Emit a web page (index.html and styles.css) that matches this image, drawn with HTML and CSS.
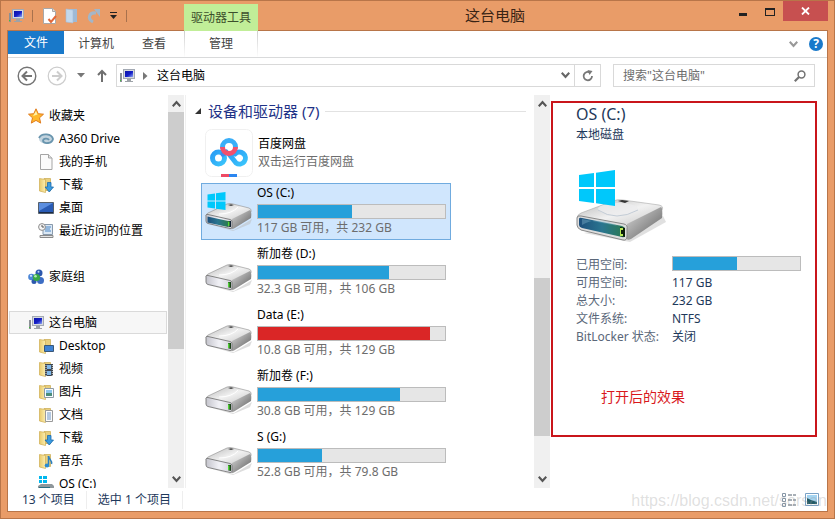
FILE: index.html
```
<!DOCTYPE html>
<html lang="zh-CN">
<head>
    <meta charset="UTF-8">
    <title>这台电脑</title>
    <link rel="stylesheet" href="styles.css">
</head>
<body>
<!-- 图标 -->
<svg class="sprite" width="0" height="0">
    <defs>
        <linearGradient id="gTop" x1="0" y1="0" x2="1" y2="1">
            <stop offset="0" stop-color="#b4b4b4"/><stop offset=".5" stop-color="#f1f1f1"/><stop offset="1" stop-color="#c4c4c4"/>
        </linearGradient>
        <linearGradient id="gSide" x1="0" y1="0" x2="1" y2="1">
            <stop offset="0" stop-color="#dcdcdc"/><stop offset=".6" stop-color="#8f8f8f"/><stop offset="1" stop-color="#5c5c5c"/>
        </linearGradient>
        <linearGradient id="gFront" x1="0" y1="0" x2="1" y2="0">
            <stop offset="0" stop-color="#c4c4cc"/><stop offset=".5" stop-color="#f1f1f6"/><stop offset="1" stop-color="#d0d0d8"/>
        </linearGradient>
        <linearGradient id="gSys" x1="0" y1="0" x2="1" y2="0">
            <stop offset="0" stop-color="#1d4f7c"/><stop offset=".5" stop-color="#2a7590"/><stop offset="1" stop-color="#2a7a50"/>
        </linearGradient>
        <linearGradient id="gFolder" x1="0" y1="0" x2="1" y2="0">
            <stop offset="0" stop-color="#e9c96a"/><stop offset="1" stop-color="#fbeeb0"/>
        </linearGradient>
        <linearGradient id="gScreen" x1="0" y1="0" x2="1" y2="1">
            <stop offset="0" stop-color="#0a12a8"/><stop offset=".55" stop-color="#1620c8"/><stop offset="1" stop-color="#8ea6f2"/>
        </linearGradient>
        <linearGradient id="gPan" x1="0" y1="0" x2="1" y2="1">
            <stop offset="0" stop-color="#2a9df5"/><stop offset="1" stop-color="#39c4fb"/>
        </linearGradient>
    </defs>
    <symbol id="pc" viewBox="0 0 16 16">
        <rect x="4.500" y="1.500" width="11" height="9" fill="#d6dae0" stroke="#a3a9b3"/>
        <rect x="6" y="3" width="8" height="6" fill="url(#gScreen)"/>
        <path d="M8 11h4v2h2v1H6v-1h2z" fill="#9da2a8"/>
        <path d="M1 5h2v9H1z" fill="#8b9096"/><path d="M1 12h1v1H1z" fill="#3fc03a"/>
    </symbol>
    <symbol id="folder" viewBox="0 0 16 16">
        <path d="M6 1.500h6.500v12H6z" fill="#e8cf7e" stroke="#c9a94e" stroke-width=".7"/>
        <path d="M1.500 1.500l6 1v13l-6-1.500z" fill="url(#gFolder)" stroke="#cfae52" stroke-width=".7"/>
    </symbol>
    <symbol id="download" viewBox="0 0 16 16">
        <use href="#folder"/>
        <path d="M9.500 5.500h3.500v4.500h2.500l-4.250 5-4.250-5h2.500z" fill="#3b9be0" stroke="#1c6bab" stroke-width=".8"/>
    </symbol>
    <symbol id="drive" viewBox="0 0 48 48">
        <path d="M4 37l25 6 18-11-2 5-17 7z" fill="#bbb" opacity=".5"/>
        <path d="M1 29Q1 27 3 26L22 17Q25 16 28 17L44 21Q47 22 46 25L27 34z" fill="url(#gTop)" stroke="#8d8d8d" stroke-width=".6"/>
        <path d="M27 32L45 23Q47 25 46 31L29 41.500Q27 42.500 26.500 41z" fill="url(#gSide)"/>
        <path d="M1 28.500Q1 27 3 27.500L25 32.500Q27 33 27 34.500V40Q27 42 25 41.500L3 36.500Q1 36 1 34z" fill="url(#gFront)" stroke="#777" stroke-width=".9"/>
        <path d="M14 27Q27 27 33 20" fill="none" stroke="#fff" stroke-width="1"/>
        <path d="M23 18l3-.8 3 .8-3 1z" fill="#444"/>
        <path d="M23 34h3v6l-3-.7z" fill="#1c401a"/><path d="M23 34.500h1.500v4.500H23z" fill="#52d636"/>
    </symbol>
    <symbol id="flag" viewBox="0 0 36 36">
        <path d="M0 5l15-2v14H0zM17 2.700L36 0v17H17zM0 19h15v14L0 31zM17 19h19v17l-19-2.700z" fill="#00c8fb"/>
    </symbol>
    <symbol id="chev" viewBox="0 0 9 7">
        <path d="M0 1.500L4.500 6.500 9 1.500 7.500 0 4.500 3.300 1.500 0z" fill="currentColor"/>
    </symbol>
</svg>

<div class="window">
    <div class="titlebar">
        <div class="quick">
            <svg class="ico" role="img"><use href="#pc"/></svg>
            <i class="bar"></i>
            <button aria-label="属性"><svg width="14" height="16" viewBox="0 0 14 16"><path d="M.5.5h9l3 3v12H.5z" fill="#fff" stroke="#a8a8a8"/><path d="M9.500.5v3h3" fill="#ddd" stroke="#a8a8a8"/><path d="M5.500 11l2.500 3 5-6" fill="none" stroke="#e2683a" stroke-width="2"/></svg></button>
            <button aria-label="新建文件夹"><svg width="14" height="16" viewBox="0 0 14 16"><path d="M5 1h7v13H5z" fill="#9fb9d4"/><path d="M1 1l7 1v13l-7-1z" fill="#c3d8ec" stroke="#a4bcd6" stroke-width=".6"/></svg></button>
            <button aria-label="撤消"><svg width="14" height="16" viewBox="0 0 14 16"><path d="M6 14C0 11 2 4 9 5" fill="none" stroke="#a3b6c8" stroke-width="3"/><path d="M7 1h6v8z" fill="#a3b6c8"/></svg></button>
            <button aria-label="自定义快速访问工具栏"><svg width="9" height="8" viewBox="0 0 9 8"><path d="M1 0h7v1H1zM1 3h7L4.500 7z" fill="#222"/></svg></button>
            <i class="bar"></i>
        </div>
        <div class="context-label">驱动器工具</div>
        <h1>这台电脑</h1>
        <div class="controls">
            <button aria-label="最小化"><svg width="10" height="12"><path d="M1 8h8v3H1z" fill="#222"/></svg></button>
            <button aria-label="最大化"><svg width="10" height="12"><path d="M0 3h10v8H0zM1 5v5h8V5z" fill="#222" fill-rule="evenodd"/></svg></button>
            <button class="close" aria-label="关闭"><svg width="9" height="8"><path d="M1 .5l7 7M8 .5l-7 7" stroke="#fff" stroke-width="1.800"/></svg></button>
        </div>
    </div>

    <div class="client">
        <div class="ribbon">
            <div class="tabs">
                <button class="file">文件</button>
                <button>计算机</button>
                <button>查看</button>
            </div>
            <button class="manage">管理</button>
            <div class="ribbon-right">
                <button aria-label="展开功能区"><svg class="grey" width="9" height="7"><use href="#chev"/></svg></button>
                <button class="help" aria-label="帮助">?</button>
            </div>
        </div>

        <div class="address-row">
            <div class="arrows">
                <button aria-label="后退"><svg width="20" height="20" viewBox="0 0 20 20" fill="none" stroke="#747474"><circle cx="10" cy="10" r="8.800" stroke-width="1.400"/><path d="M15 10H6M10 5.500L5.500 10l4.500 4.500" stroke-width="2"/></svg></button>
                <button aria-label="前进"><svg width="20" height="20" viewBox="0 0 20 20" fill="none" stroke="#cdcdcd"><circle cx="10" cy="10" r="8.800" stroke-width="1.200"/><path d="M5 10h9M10 5.500l4.500 4.500-4.500 4.500" stroke-width="2"/></svg></button>
                <button class="recent" aria-label="最近位置"><svg width="8" height="5"><path d="M0 0h8L4 4.500z" fill="#777"/></svg></button>
                <button aria-label="上移"><svg width="10" height="13" fill="none" stroke="#6f6f6f" stroke-width="2"><path d="M5 13V2M1 6l4-4 4 4"/></svg></button>
            </div>
            <div class="address">
                <svg class="ico"><use href="#pc"/></svg>
                <svg width="5" height="8"><path d="M0 0l4.500 4L0 8z" fill="#777"/></svg>
                <button class="crumb">这台电脑</button>
                <button class="drop" aria-label="以前的位置"><svg width="9" height="7"><use href="#chev"/></svg></button>
                <button class="refresh" aria-label="刷新"><svg width="12" height="12" viewBox="0 0 12 12"><path d="M8 2.500A4.200 4.200 0 1 0 10 6" fill="none" stroke="#777" stroke-width="1.800"/><path d="M5.500 0l5 1L7.500 5z" fill="#777"/></svg></button>
            </div>
            <div class="search">
                <input type="text" aria-label="搜索" placeholder='搜索"这台电脑"'>
                <svg width="12" height="12" viewBox="0 0 12 12" fill="none" stroke="#737373"><circle cx="7.500" cy="4.500" r="3.400" stroke-width="1.500"/><path d="M5 7L.8 11.200" stroke-width="2.200"/></svg>
            </div>
        </div>

        <div class="main">
            <nav class="nav">
                <div class="tree">
                    <div class="group">
                        <a href="#" class="root"><svg class="ico" viewBox="0 0 16 16"><path d="M8 .8l2.200 4.900 5.300.5-4 3.600 1.200 5.300L8 12.400l-4.700 2.700 1.200-5.300-4-3.600 5.300-.5z" fill="#ffb92c" stroke="#e07b1d"/><path d="M8 3l1.500 3.500L5 8z" fill="#fff3a8"/></svg>收藏夹</a>
                        <a href="#"><svg class="ico" viewBox="0 0 16 16" fill="none"><ellipse cx="8" cy="8" rx="7" ry="4.500" fill="#c2d3de"/><path d="M1 7C4 1 14 3 15 8c-1 5-9 5-10 2 0-3 5-3 6-1" stroke="#6995ae" stroke-width="1.800"/></svg>A360 Drive</a>
                        <a href="#"><svg class="ico" viewBox="0 0 16 16"><path d="M2.500.5h8l3.500 3.500v11.500H2.500z" fill="#fbfbfb" stroke="#a5a5a5"/><path d="M10.500.5V4H14" fill="#e2e2e2" stroke="#a5a5a5"/></svg>我的手机</a>
                        <a href="#"><svg class="ico"><use href="#download"/></svg>下载</a>
                        <a href="#"><svg class="ico" viewBox="0 0 16 16"><path d="M.5 2.500h15v11H.5z" fill="#295bb5" stroke="#55606d"/><path d="M1 3h14L1 11z" fill="#5b8ee0"/><path d="M1 12h14v1H1z" fill="#1c2b44"/></svg>桌面</a>
                        <a href="#"><svg class="ico" viewBox="0 0 16 16"><path d="M5 1.500h9.500v10H5z" fill="#dbe8f5" stroke="#8899ab"/><path d="M7 4h6M7 6h5M7 8h6" stroke="#4b86c5"/><path d="M2 12.500h13v2H2z" fill="#e4e4e4" stroke="#8a8a8a"/><circle cx="4" cy="4" r="3.400" fill="#f7f7f7" stroke="#8b8b8b"/><path d="M4 2v2h2" fill="none" stroke="#555"/></svg>最近访问的位置</a>
                    </div>
                    <div class="group">
                        <a href="#" class="root"><svg class="ico" viewBox="0 0 16 16"><circle cx="3.500" cy="8" r="3.300" fill="#4b86d6"/><circle cx="11" cy="4" r="3.500" fill="#2c58ad"/><circle cx="12.500" cy="11.500" r="3.500" fill="#3c6dc4"/><circle cx="6" cy="12.500" r="2.500" fill="#2c58ad"/><circle cx="8.500" cy="8.500" r="3.600" fill="#37a845"/><circle cx="7.500" cy="7.300" r="1.300" fill="#b5eeb0"/><circle cx="10.500" cy="2.800" r="1" fill="#b9d4fa"/><circle cx="3" cy="6.800" r="1.100" fill="#cde2ff"/></svg>家庭组</a>
                    </div>
                    <div class="group">
                        <a href="#" class="root current"><svg class="ico"><use href="#pc"/></svg>这台电脑</a>
                        <a href="#"><svg class="ico" viewBox="0 0 16 16"><use href="#folder"/><path d="M6.500 7.500h9v6h-9z" fill="#3f83d4" stroke="#3b5877"/></svg>Desktop</a>
                        <a href="#"><svg class="ico" viewBox="0 0 16 16"><use href="#folder"/><path d="M7 3h8v12H7z" fill="#3e4750"/><path d="M9 4h4v4H9zM9 10h4v4H9z" fill="#7eb6e8"/><path d="M8 4v11M14.300 4v11" stroke="#ddd" stroke-dasharray="1 1"/></svg>视频</a>
                        <a href="#"><svg class="ico" viewBox="0 0 16 16"><use href="#folder"/><path d="M6.500 4.500h9v9h-9z" fill="#f7fbff" stroke="#8f9aa5"/><path d="M8 6h6v3H8z" fill="#8bc5ee"/><path d="M8 9h6v3H8z" fill="#4a8c79"/></svg>图片</a>
                        <a href="#"><svg class="ico" viewBox="0 0 16 16"><use href="#folder"/><path d="M7.500 3.500h7v11h-7z" fill="#fbfbfb" stroke="#999"/><path d="M9 6h4M9 8h4M9 10h4M9 12h4" stroke="#6d95c5"/></svg>文档</a>
                        <a href="#"><svg class="ico"><use href="#download"/></svg>下载</a>
                        <a href="#"><svg class="ico" viewBox="0 0 16 16"><use href="#folder"/><path d="M10.500 3c0 3 4 4 3 8" fill="none" stroke="#2b7fc0" stroke-width="1.500"/><path d="M10.500 3v9" stroke="#2b7fc0" stroke-width="1.500"/><ellipse cx="9" cy="12.500" rx="2.300" ry="1.900" fill="#2b8bd0"/></svg>音乐</a>
                        <a href="#"><svg class="ico" viewBox="0 0 16 16"><path d="M1 0h3v3H1zM5 0h4v3H5zM1 4h3v3H1zM5 4h4v3H5z" fill="#00b7ee"/><path d="M0 10l3-2h11l2 2v4H0z" fill="#8f979b"/><path d="M1 11h11v2H1z" fill="#2d6e80"/></svg>OS (C:)</a>
                    </div>
                </div>
                <div class="scroll">
                    <button aria-label="向上滚动"><svg class="up" width="9" height="7"><use href="#chev"/></svg></button>
                    <div class="track"><div class="thumb nav-thumb"></div></div>
                    <button aria-label="向下滚动"><svg width="9" height="7"><use href="#chev"/></svg></button>
                </div>
            </nav>

            <section class="list">
                <div class="content">
                    <h2><svg width="7" height="7"><path d="M6 0v6H0z" fill="#333"/></svg>设备和驱动器 (7)</h2>
                    <div class="drives">
                        <a href="#" class="drive app">
                            <svg class="big" viewBox="0 0 48 48"><rect x=".5" y=".5" width="47" height="47" rx="6" fill="#fff" stroke="#f0f0f0"/>
                                <g fill="none" stroke-width="5" stroke-linecap="round">
                                    <circle cx="13.500" cy="29" r="6" stroke="url(#gPan)"/>
                                    <path d="M30 25a6 6 0 1 1 1 9L24 25" stroke="url(#gPan)"/>
                                    <path d="M18 25l3-2" stroke="#3a8cf0"/>
                                    <path d="M17.500 18a6.500 6.500 0 0 1 13 0" stroke="#3aaef8"/>
                                    <path d="M17.500 18a6.500 6.500 0 0 0 13 0" stroke="#f2506c" stroke-linecap="butt"/>
                                </g>
                                <path d="M16 45h8v3h-8z" fill="#ef4a64"/><path d="M24 45h8v3h-8z" fill="#2b86f0"/></svg>
                            <div class="info"><div>百度网盘</div><div class="sub">双击运行百度网盘</div></div>
                        </a>
                        <a href="#" class="drive selected">
                            <svg class="big" viewBox="0 0 48 48"><use href="#drive"/><path d="M2.500 29.500l20.500 4.500v6L2.500 35.500z" fill="url(#gSys)"/><path d="M23 34h3v6l-3-.7z" fill="#123"/><path d="M23 34.500h1.500v4.500H23z" fill="#52d636"/><use href="#flag" x="2" y="5" width="19" height="18"/></svg>
                            <div class="info"><div>OS (C:)</div><div class="meter"><div class="fill" style="width: 50%"></div></div><div class="sub">117 GB 可用，共 232 GB</div></div>
                        </a>
                        <a href="#" class="drive">
                            <svg class="big"><use href="#drive"/></svg>
                            <div class="info"><div>新加卷 (D:)</div><div class="meter"><div class="fill" style="width: 70%"></div></div><div class="sub">32.3 GB 可用，共 106 GB</div></div>
                        </a>
                        <a href="#" class="drive">
                            <svg class="big"><use href="#drive"/></svg>
                            <div class="info"><div>Data (E:)</div><div class="meter"><div class="fill full" style="width: 92%"></div></div><div class="sub">10.8 GB 可用，共 129 GB</div></div>
                        </a>
                        <a href="#" class="drive">
                            <svg class="big"><use href="#drive"/></svg>
                            <div class="info"><div>新加卷 (F:)</div><div class="meter"><div class="fill" style="width: 76%"></div></div><div class="sub">30.8 GB 可用，共 129 GB</div></div>
                        </a>
                        <a href="#" class="drive">
                            <svg class="big"><use href="#drive"/></svg>
                            <div class="info"><div>S (G:)</div><div class="meter"><div class="fill" style="width: 34%"></div></div><div class="sub">52.8 GB 可用，共 79.8 GB</div></div>
                        </a>
                    </div>
                </div>
                <div class="scroll">
                    <button aria-label="向上滚动"><svg class="up" width="9" height="7"><use href="#chev"/></svg></button>
                    <div class="track"><div class="thumb list-thumb"></div></div>
                    <button aria-label="向下滚动"><svg width="9" height="7"><use href="#chev"/></svg></button>
                </div>
            </section>

            <aside class="details">
                <h2>OS (C:)</h2>
                <p>本地磁盘</p>
                <svg class="preview" width="94" height="84" viewBox="0 0 94 84">
                    <path d="M8 71l46 9 36-20-3-6z" fill="#999" opacity=".3"/>
                    <path d="M1 56Q1 53 5 51L37 39Q41 37 47 38L83 43Q88 44 86 48L52 65z" fill="url(#gTop)" stroke="#aaa" stroke-width=".6"/>
                    <ellipse cx="42" cy="47" rx="20" ry="6" fill="#ececee" opacity=".8"/><path d="M22 48Q40 60 62 48" fill="none" stroke="#c3ccd6"/>
                    <path d="M51 62L85 45Q87 46 86 56L55 77Q51 79 50 76z" fill="url(#gSide)"/>
                    <path d="M1 56Q1 53 5 54L48 62Q52 63 51 67V74Q51 79 47 78L5 68Q1 66 1 63z" fill="#ddd" stroke="#888"/>
                    <path d="M3 57Q3 55 6 56L46 64Q49 65 49 67V73Q49 76 46 75L6 66Q3 65 3 63z" fill="url(#gSys)"/>
                    <path d="M6 63Q22 53 42 64L6 57z" fill="#8fc0d8" opacity=".35"/>
                    <path d="M44 65l5 1v9l-5-1z" fill="#0b1d0b"/><path d="M44 66h1v8h-1zM45 66h2v2h-2zM45 72h2v2h-2z" fill="#b6e854"/>
                    <path d="M42 39l4-1 7 1-4 2z" fill="#333"/>
                    <use href="#flag" x="3" y="8" width="36" height="36"/>
                </svg>
                <dl>
                    <dt>已用空间:</dt><dd><div class="meter"><div class="fill" style="width: 50%"></div></div></dd>
                    <dt>可用空间:</dt><dd>117 GB</dd>
                    <dt>总大小:</dt><dd>232 GB</dd>
                    <dt>文件系统:</dt><dd>NTFS</dd>
                    <dt>BitLocker 状态:</dt><dd>关闭</dd>
                </dl>
                <p class="note">打开后的效果</p>
            </aside>
        </div>

        <div class="status">
            <span>13 个项目</span>
            <span>选中 1 个项目</span>
            <div class="views">
                <button aria-label="详细信息"><svg width="16" height="14" viewBox="0 0 16 14"><path d="M1.500.5h3v3h-3zM1.500 5.500h3v3h-3zM1.500 10.500h3v3h-3z" fill="#fff" stroke="#8696a6"/><path d="M7 2h4M12 2h3M7 7h4M12 7h3M7 12h4M12 12h3" stroke="#53616e"/></svg></button>
                <button aria-label="大图标"><svg width="14" height="13" viewBox="0 0 14 13"><path d="M.5.5h13v12H.5z" fill="#fff" stroke="#7aa2c6"/><path d="M2 2h10v9H2z" fill="#a5d5f2"/><path d="M2 5l4 2 6 2v2H2z" fill="#245b66"/></svg></button>
            </div>
        </div>
        <div class="watermark">https://blog.csdn.net/sorsan</div>
    </div>
</div>
</body>
</html>
```
FILE: styles.css
```
* {
    box-sizing: border-box;
}

body {
    margin: 0;
    font: 12px/18px "Noto Sans", "Noto Sans CJK SC", sans-serif;
    color: #000;
}

h1, h2, p, dl, dd {
    margin: 0;
    font-weight: normal;
}

a {
    color: inherit;
    text-decoration: none;
}

button {
    display: flex;
    align-items: center;
    justify-content: center;
    padding: 0;
    border: 0;
    background: none;
    font: inherit;
    color: inherit;
}

svg {
    display: block;
    flex: none;
}

.sprite {
    position: absolute;
}

.ico {
    width: 16px;
    height: 16px;
}

.window {
    display: flex;
    flex-direction: column;
    height: 100vh;
    padding: 0 6px 6px;
    border: 1px solid #b87549;
    background: #e99c68;
}

/* 标题栏 */
.titlebar {
    display: flex;
    height: 29px;
    padding-left: 1px;
}

.quick {
    display: flex;
    align-items: center;
    gap: 8px;
    width: 176px;
}

.bar {
    width: 1px;
    height: 12px;
    margin-right: 2px;
    background: #a8714d;
}

.context-label {
    z-index: 1;
    width: 74px;
    margin: 3px 0 -1px;
    line-height: 27px;
    text-align: center;
    color: #3c4f2c;
    background: #c1ee98;
}

.titlebar h1 {
    flex: 1;
    padding-left: 3px;
    font-size: 15px;
    line-height: 29px;
    text-align: center;
    color: #3a2415;
}

.controls {
    display: flex;
}

.controls button {
    width: 27px;
    height: 20px;
}

.controls .close {
    width: 45px;
    background: #c75050;
}

.client {
    position: relative;
    display: flex;
    flex-direction: column;
    flex: 1;
    min-height: 0;
    border: 1px solid #b87549;
    background: #fff;
}

/* 功能区 */
.ribbon {
    display: flex;
    height: 27px;
    border-bottom: 1px solid #d9dadb;
    color: #444;
}

.tabs {
    display: flex;
    width: 176px;
}

.tabs button {
    height: 26px;
    padding: 0 14px;
}

.tabs .file {
    width: 56px;
    height: 23px;
    color: #fff;
    background: #1979ca;
}

.manage {
    width: 74px;
    border: solid #dcdcdc;
    border-width: 0 1px;
    border-image: linear-gradient(#ccc, #fff) 1;
}

.ribbon-right {
    display: flex;
    align-items: center;
    gap: 11px;
    margin-left: auto;
    padding-right: 4px;
}

.grey {
    color: #999;
}

.help {
    width: 14px;
    height: 14px;
    border-radius: 50%;
    font-size: 12px;
    font-weight: bold;
    color: #fff;
    background: #1979ca;
}

/* 地址栏 */
.address-row {
    display: flex;
    gap: 12px;
    padding: 6px 12px 8px 9px;
}

.arrows {
    display: flex;
    align-items: center;
    gap: 10px;
}

.recent {
    margin-right: 2px;
}

.address {
    display: flex;
    flex: 1;
    align-items: center;
    height: 23px;
    margin-left: -3px;
    padding-left: 2px;
    border: 1px solid #d9d9d9;
}

.address .ico {
    margin-right: 8px;
}

.crumb {
    margin-left: 9px;
}

.drop {
    width: 18px;
    height: 21px;
    margin-left: auto;
    color: #666;
}

.refresh {
    width: 26px;
    height: 21px;
    border-left: 1px solid #d9d9d9;
}

.search {
    display: flex;
    align-items: center;
    width: 202px;
    height: 23px;
    padding: 0 8px 0 9px;
    border: 1px solid #d9d9d9;
}

.search input {
    flex: 1;
    min-width: 0;
    padding: 0;
    border: 0;
    outline: 0;
    font: inherit;
}

.search input::placeholder {
    color: #6d6d6d;
}

/* 主体 */
.main {
    display: flex;
    flex: 1;
    min-height: 0;
}

.nav {
    display: flex;
    width: 178px;
    padding-right: 1px;
    border-right: 1px solid #f0f0f0;
}

.tree {
    flex: 1;
    padding: 9px 1px 0;
    overflow: hidden;
}

.group {
    margin-bottom: 23px;
}

.group a {
    display: flex;
    align-items: center;
    gap: 5px;
    height: 23px;
    padding-left: 28px;
    border: 1px solid transparent;
}

.group .root {
    padding-left: 18px;
}

.group .current {
    border-color: #dadada;
    background: #f7f7f7;
}

.scroll {
    display: flex;
    flex-direction: column;
    width: 16px;
    color: #555;
    background: #f0f0f0;
}

.scroll button {
    height: 17px;
}

.track {
    flex: 1;
}

.up {
    transform: rotate(180deg);
}

.thumb {
    background: #cdcdcd;
}

.nav-thumb {
    height: 66%;
}

.list-thumb {
    height: 44%;
    margin-top: 166px;
}

.list {
    display: flex;
    flex: 1;
    min-width: 0;
}

.content {
    flex: 1;
    min-width: 0;
    padding: 6px 8px 0 9px;
    overflow: hidden;
}

.content h2 {
    display: flex;
    align-items: center;
    gap: 6px;
    margin-bottom: 1px;
    font-size: 15px;
    line-height: 20px;
    color: #1e3287;
}

.content h2::after {
    content: "";
    flex: 1;
    height: 1px;
    background: #e2e2e2;
}

.drives {
    display: grid;
    grid-template-columns: repeat(auto-fill, 250px);
    gap: 4px;
    padding-left: 6px;
}

.drive {
    display: flex;
    align-items: center;
    gap: 4px;
    height: 57px;
    padding: 0 4px 2px 3px;
    border: 1px solid transparent;
}

.drive.app {
    padding-top: 4px;
    padding-bottom: 0;
}

.selected {
    border-color: #70abdf;
    background: #d0e6fd;
}

.big {
    width: 48px;
    height: 48px;
}

.info {
    flex: 1;
}

.app .info {
    padding-left: 1px;
}

.sub {
    color: #6d6d6d;
}

.meter {
    height: 15px;
    border: 1px solid #bcbcbc;
    background: #e6e6e6;
}

.info .meter {
    margin-top: 2px;
}

.fill {
    height: 100%;
    background: #26a0da;
}

.full {
    background: #da2626;
}

/* 详细信息窗格 */
.details {
    align-self: flex-start;
    width: 266px;
    margin: 6px 10px 0 1px;
    padding: 0 14px 28px 23px;
    border: 2px solid #c9151b;
    color: #1e395b;
}

.details h2 {
    font-size: 16px;
    line-height: 22px;
}

.details p {
    line-height: 20px;
}

.preview {
    margin: 17px 0 10px;
}

.details dl {
    display: grid;
    grid-template-columns: 96px 1fr;
}

.details dt {
    color: #5a6779;
}

.details .note {
    margin: 41px 0 0 25px;
    font-size: 14px;
    color: #d9181c;
}

/* 状态栏 */
.status {
    display: flex;
    align-items: center;
    height: 23px;
    padding: 0 8px 0 3px;
    color: #1e395b;
}

.status span {
    padding: 0 11px;
    border-right: 1px solid #eee;
}

.views {
    display: flex;
    gap: 8px;
    margin-left: auto;
}

.watermark {
    position: absolute;
    right: 0;
    bottom: 0;
    font: 16px/20px "Liberation Sans", sans-serif;
    color: rgba(150, 150, 150, .3);
}
```
